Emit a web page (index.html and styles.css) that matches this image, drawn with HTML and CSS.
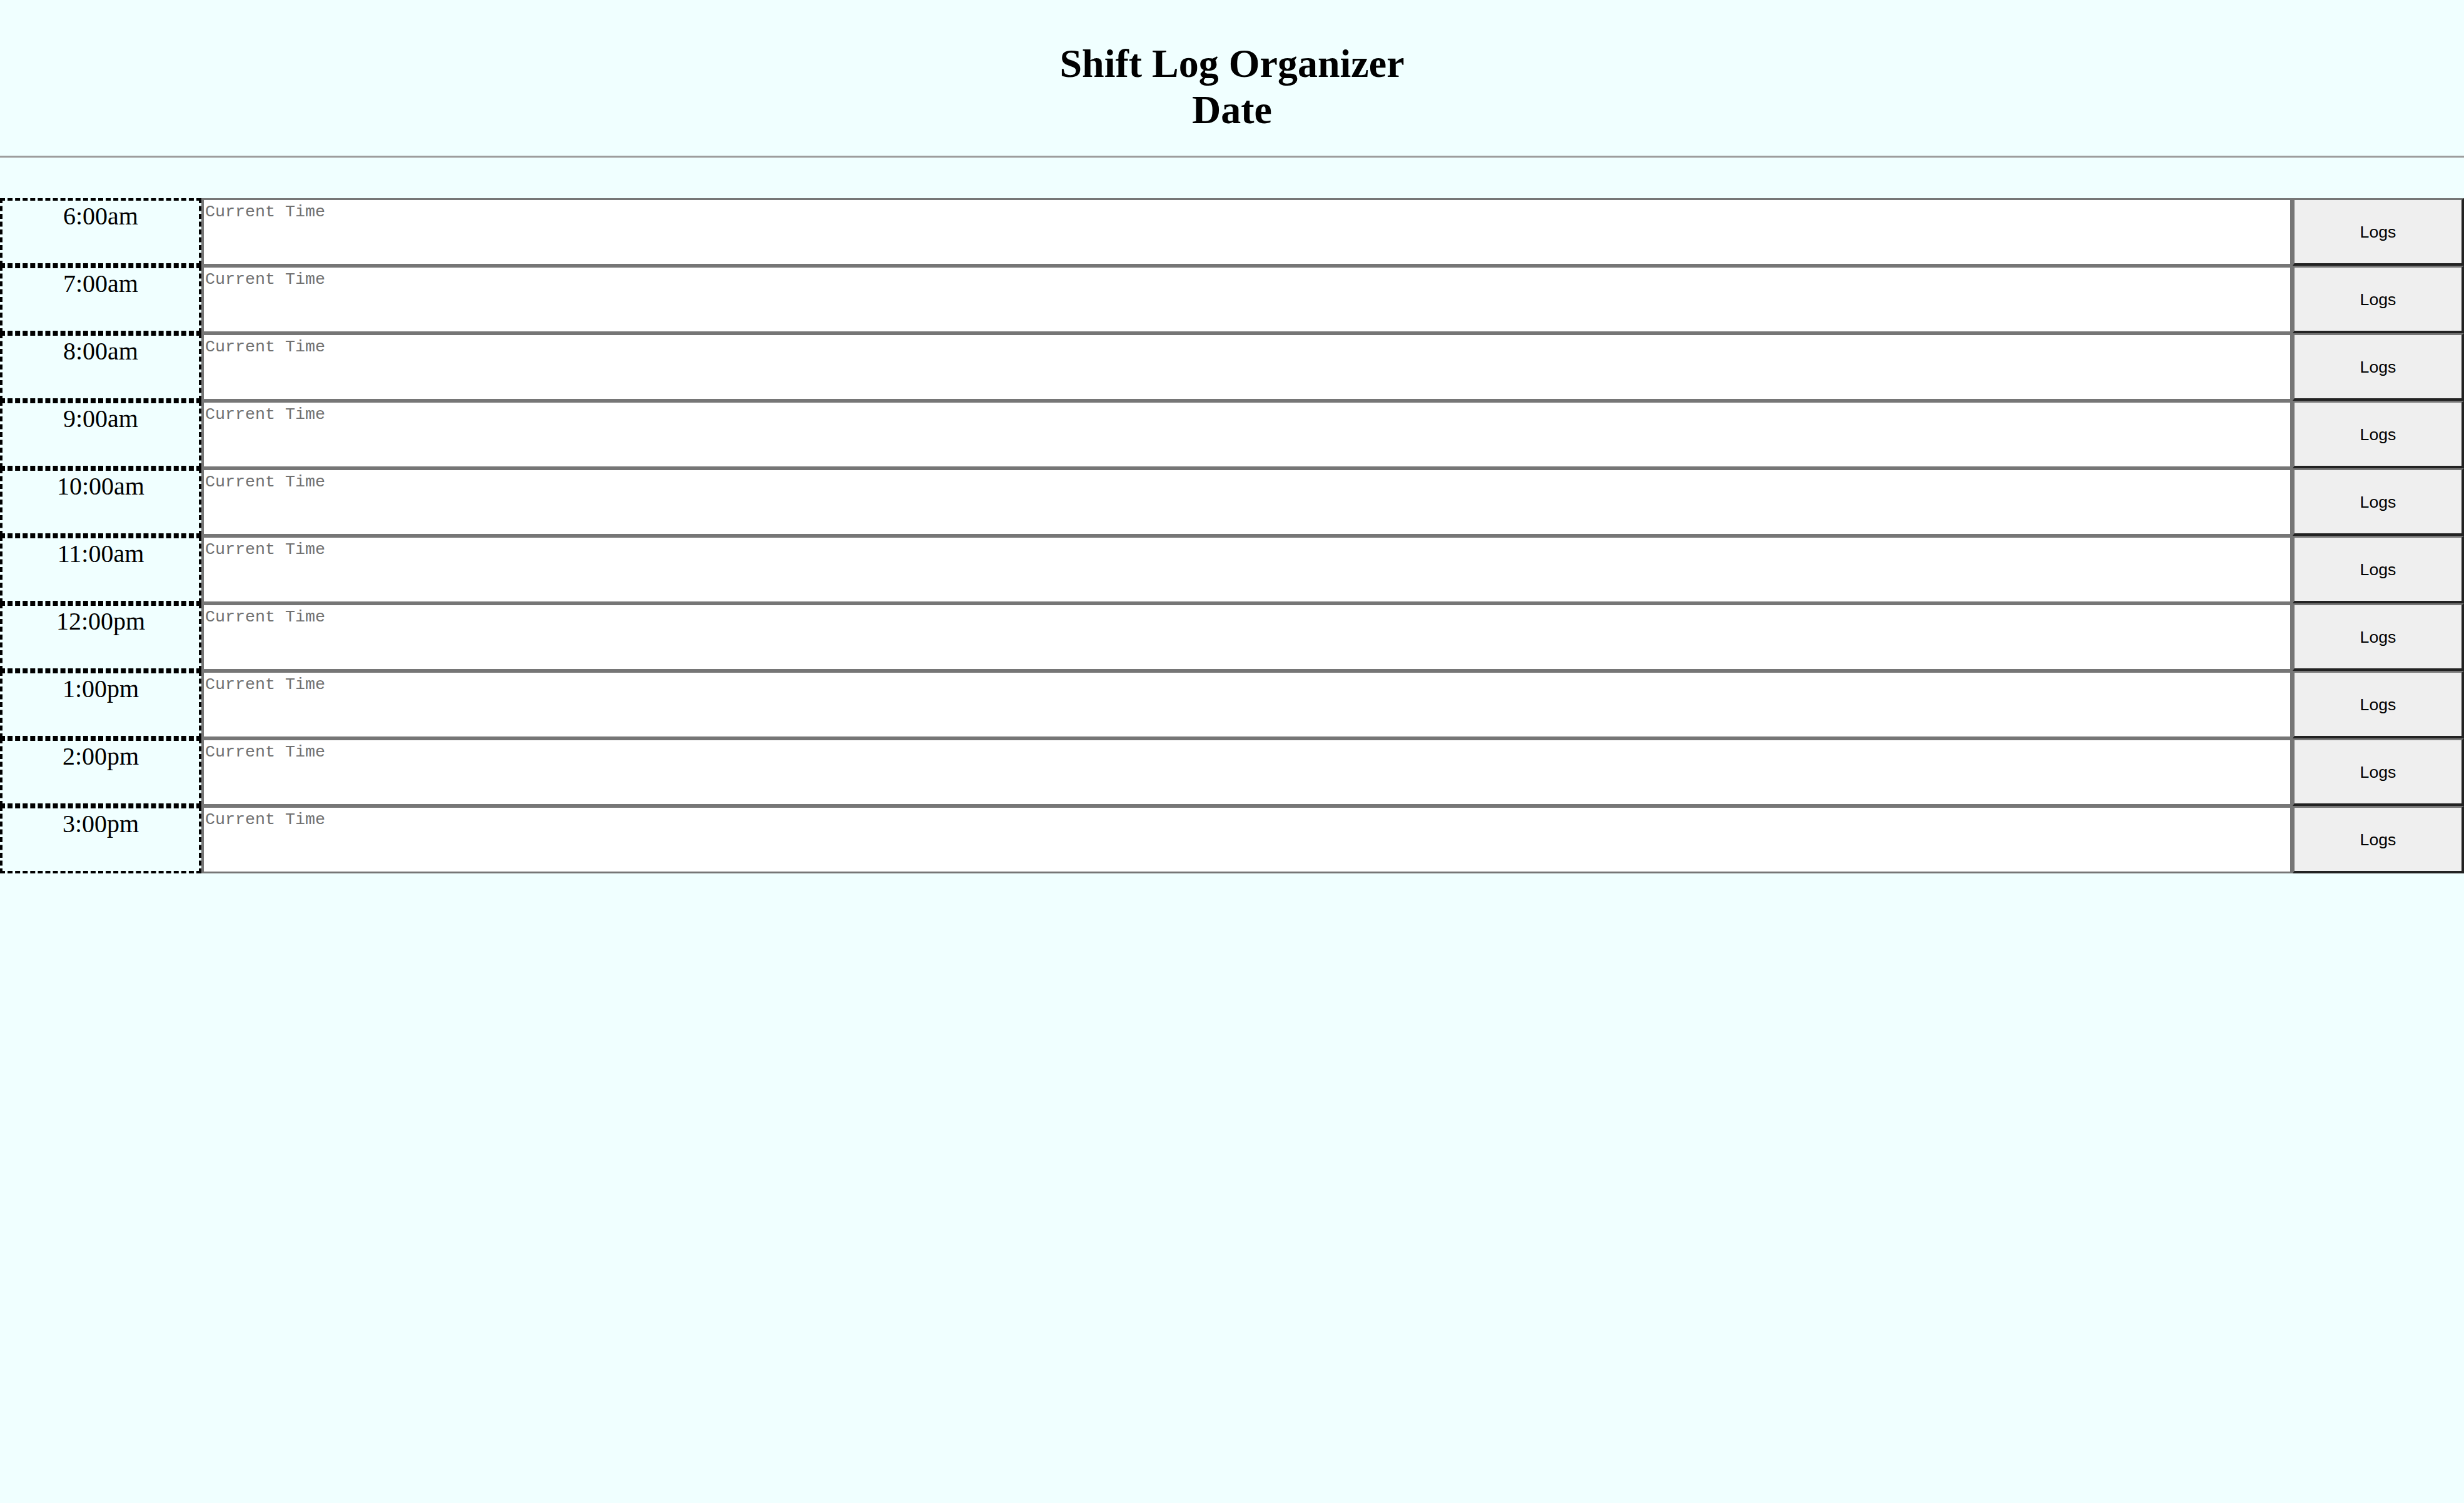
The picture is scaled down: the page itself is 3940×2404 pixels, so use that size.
FILE: index.html
```html
<!DOCTYPE html>
<html lang="en">
<head>
<meta charset="utf-8">
<title>Shift Log Organizer</title>
<link rel="stylesheet" href="styles.css">
</head>
<body>
<header class="header">
  <h1 class="title"><span class="title-line">Shift Log Organizer</span><span class="title-line">Date</span></h1>
</header>
<hr class="divider">
<main class="schedule">
  <div class="row"><div class="hour">6:00am</div><textarea class="log" placeholder="Current Time"></textarea><button class="save">Logs</button></div>
  <div class="row"><div class="hour">7:00am</div><textarea class="log" placeholder="Current Time"></textarea><button class="save">Logs</button></div>
  <div class="row"><div class="hour">8:00am</div><textarea class="log" placeholder="Current Time"></textarea><button class="save">Logs</button></div>
  <div class="row"><div class="hour">9:00am</div><textarea class="log" placeholder="Current Time"></textarea><button class="save">Logs</button></div>
  <div class="row"><div class="hour">10:00am</div><textarea class="log" placeholder="Current Time"></textarea><button class="save">Logs</button></div>
  <div class="row"><div class="hour">11:00am</div><textarea class="log" placeholder="Current Time"></textarea><button class="save">Logs</button></div>
  <div class="row"><div class="hour">12:00pm</div><textarea class="log" placeholder="Current Time"></textarea><button class="save">Logs</button></div>
  <div class="row"><div class="hour">1:00pm</div><textarea class="log" placeholder="Current Time"></textarea><button class="save">Logs</button></div>
  <div class="row"><div class="hour">2:00pm</div><textarea class="log" placeholder="Current Time"></textarea><button class="save">Logs</button></div>
  <div class="row"><div class="hour">3:00pm</div><textarea class="log" placeholder="Current Time"></textarea><button class="save">Logs</button></div>
</main>
</body>
</html>
```
FILE: styles.css
```css
html, body {
  margin: 0;
  padding: 0;
  background: #f0ffff;
}

body {
  font-family: "Liberation Serif", "Times New Roman", serif;
  color: #000;
}

.header {
  padding-top: 65px;
  text-align: center;
}

.title {
  margin: 0;
  font-size: 64px;
  font-weight: bold;
  line-height: 74px;
}

.title-line {
  display: block;
}

.divider {
  margin: 36px 0 0 0;
  height: 0;
  border: none;
  border-top: 3px solid #9d9d9d;
  border-bottom: 1px solid #e4eeee;
}

.schedule {
  margin-top: 64px;
  display: flex;
  flex-direction: column;
}

.row {
  display: flex;
  height: 108px;
}

.hour {
  box-sizing: border-box;
  width: 322px;
  flex: 0 0 322px;
  height: 108px;
  padding-top: 2px;
  border: 4px dashed #000;
  font-size: 40px;
  line-height: 46px;
  text-align: center;
}

.log {
  box-sizing: border-box;
  flex: 1 1 auto;
  height: 108px;
  margin: 0;
  padding: 4px 2px 2px 2px;
  border: 3px solid #767676;
  border-left-width: 4px;
  border-right-width: 4px;
  background: #fff;
  resize: none;
  font-family: "Liberation Mono", "Courier New", monospace;
  font-size: 26.67px;
  color: #000;
}

.log::placeholder {
  color: #707070;
}

.save {
  box-sizing: border-box;
  flex: 0 0 274px;
  width: 274px;
  height: 108px;
  margin: 0;
  padding: 2px 0 0 0;
  background: #efefef;
  border-style: solid;
  border-width: 3px 4px 4px 3px;
  border-color: #767676 #222222 #222222 #767676;
  font-family: "Liberation Sans", Arial, sans-serif;
  font-size: 26.67px;
  color: #000;
}
```
